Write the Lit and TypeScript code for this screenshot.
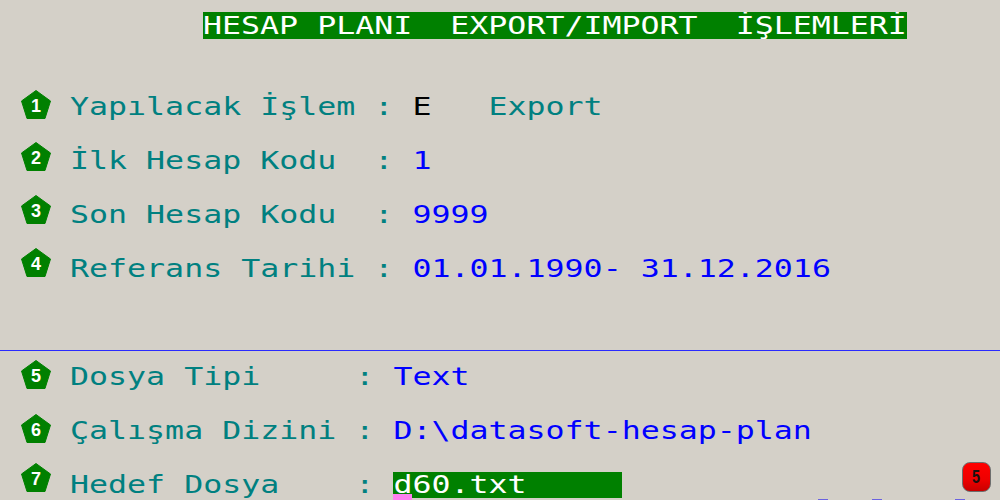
import { LitElement, html, css } from "lit";
import { customElement } from "lit/decorators.js";

type Part = [string, string];
interface Row { n: number; badgeTop: number; parts: Part[]; }

const ROWS_A: Row[] = [
  { n: 1, badgeTop: 90, parts: [["t", "Yapılacak İşlem : "], ["k", "E"], ["t", "   Export"]] },
  { n: 2, badgeTop: 142, parts: [["t", "İlk Hesap Kodu  : "], ["b", "1"]] },
  { n: 3, badgeTop: 195, parts: [["t", "Son Hesap Kodu  : "], ["b", "9999"]] },
  { n: 4, badgeTop: 248, parts: [["t", "Referans Tarihi : "], ["b", "01.01.1990- 31.12.2016"]] },
];
const ROWS_B: Row[] = [
  { n: 5, badgeTop: 360, parts: [["t", "Dosya Tipi     : "], ["b", "Text"]] },
  { n: 6, badgeTop: 414, parts: [["t", "Çalışma Dizini : "], ["b", "D:\\datasoft-hesap-plan"]] },
];

@customElement("app-root")
export class AppRoot extends LitElement {
  static styles = css`
    :host {
      display: block;
      position: relative;
      width: 1000px;
      height: 500px;
      overflow: hidden;
      background: #d4d0c8;
      font-family: "DejaVu Sans Mono", monospace;
      font-size: 24px;
    }
    .screen { display: flex; flex-direction: column; padding-top: 12px; }
    .title {
      align-self: flex-start;
      margin-left: 203px;
      width: 704px;
      height: 27px;
      background: #008000;
      overflow: hidden;
    }
    .line {
      display: block;
      height: 54px;
      line-height: 54px;
      white-space: pre;
      transform: scaleX(1.3165);
      transform-origin: left center;
    }
    .title .line { height: 27px; line-height: 29px; color: #fff; }
    .rows { display: flex; flex-direction: column; margin-left: 70px; }
    .rows.a { margin-top: 41px; }
    .rule { height: 1px; background: #2a2aff; margin-top: 54px; }
    .rows.b { margin-top: -1px; }
    .t { color: #008080; }
    .b { color: #0000ff; }
    .k { color: #000; }
    .field { position: relative; height: 54px; }
    .field-bg {
      position: absolute;
      left: 323px;
      top: 14px;
      width: 229px;
      height: 26px;
      background: #008000;
    }
    .cursor {
      position: absolute;
      left: 323px;
      top: 36px;
      width: 19px;
      height: 6px;
      background: #ff80f0;
    }
    .w { color: #fff; }
    .field .line { position: relative; z-index: 1; }
    .badge {
      position: absolute;
      left: 21px;
      width: 30px;
      height: 29px;
    }
    .badge polygon { fill: #008000; stroke: #008000; stroke-width: 1; stroke-linejoin: round; }
    .badge text {
      fill: #fff;
      font-family: "Liberation Sans", Arial, sans-serif;
      font-weight: 700;
      font-size: 18px;
      text-anchor: middle;
    }
    .alert {
      position: absolute;
      left: 962px;
      top: 462px;
      width: 29px;
      height: 30px;
      box-sizing: border-box;
      display: flex;
      align-items: center;
      justify-content: center;
      border-radius: 8px;
      border: 1px solid #6e6e6e;
      background: linear-gradient(#ff0000, #ee0000 60%, #c80000);
      color: #1a1010;
      font-family: "Liberation Sans", Arial, sans-serif;
      font-size: 18px;
      font-weight: 700;
    }
    .alert span { display: block; transform: scaleX(0.8); }
    .ticks { position: absolute; top: 499px; left: 0; }
    .tick { position: absolute; top: 0; height: 1px; width: 10px; background: #6a62e0; }
  `;

  private line(parts: Part[]) {
    return html`<span class="line">${parts.map(([c, s]) => html`<span class=${c}>${s}</span>`)}</span>`;
  }

  private badge(n: number, top: number) {
    return html`<svg class="badge" style="top:${top}px" viewBox="0 0 30 29">
      <polygon points="15,0.5 29.5,11 24,28.5 6,28.5 0.5,11"></polygon>
      <text x="15" y="21.5">${n}</text>
    </svg>`;
  }

  render() {
    return html`
      <div class="screen">
        <div class="title"><span class="line">HESAP PLANI  EXPORT/IMPORT  İŞLEMLERİ</span></div>
        <div class="rows a">${ROWS_A.map((r) => this.line(r.parts))}</div>
        <div class="rule"></div>
        <div class="rows b">
          ${ROWS_B.map((r) => this.line(r.parts))}
          <div class="field">
            <div class="field-bg"></div>
            <div class="cursor"></div>
            ${this.line([["t", "Hedef Dosya    : "], ["w", "d60.txt"]])}
          </div>
        </div>
      </div>
      ${[...ROWS_A, ...ROWS_B].map((r) => this.badge(r.n, r.badgeTop))}
      ${this.badge(7, 463)}
      <div class="alert"><span>5</span></div>
      <div class="ticks">
        ${[818, 872, 955].map((x) => html`<div class="tick" style="left:${x}px"></div>`)}
      </div>
    `;
  }
}
